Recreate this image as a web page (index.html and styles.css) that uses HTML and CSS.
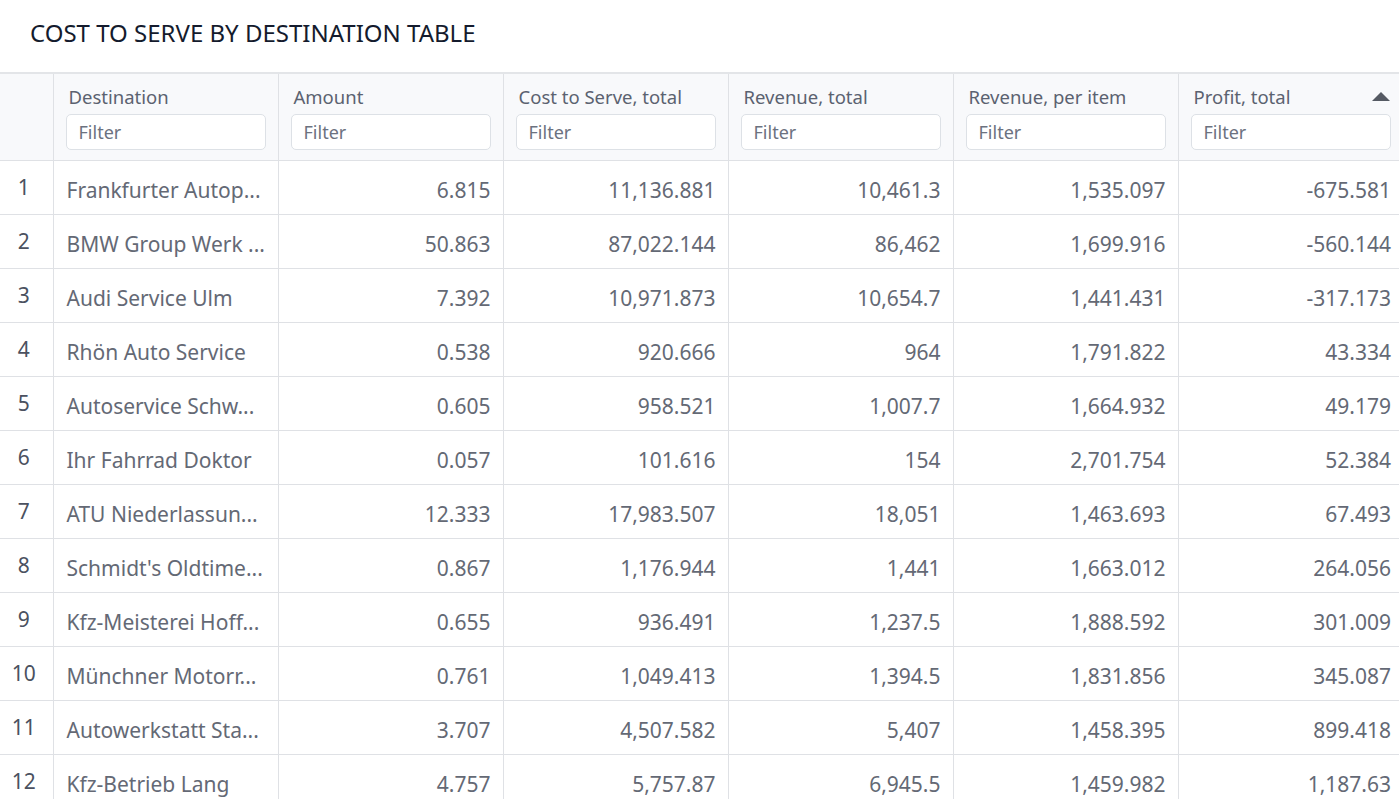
FILE: index.html
```html
<!DOCTYPE html>
<html>
<head>
<meta charset="utf-8">
<link rel="stylesheet" href="styles.css">
</head>
<body>
<div class="page">
  <h1 class="title">COST TO SERVE BY DESTINATION TABLE</h1>
  <div class="table-wrap">
    <table class="grid">
      <colgroup>
        <col class="c-idx"><col class="c-col"><col class="c-col"><col class="c-col"><col class="c-col"><col class="c-col"><col class="c-col">
      </colgroup>
      <thead>
        <tr>
          <th class="idx"></th>
          <th><div class="label">Destination</div><input class="filter" placeholder="Filter"></th>
          <th><div class="label">Amount</div><input class="filter" placeholder="Filter"></th>
          <th><div class="label">Cost to Serve, total</div><input class="filter" placeholder="Filter"></th>
          <th><div class="label">Revenue, total</div><input class="filter" placeholder="Filter"></th>
          <th><div class="label">Revenue, per item</div><input class="filter" placeholder="Filter"></th>
          <th><div class="label sorted">Profit, total<span class="sort-arrow"></span></div><input class="filter" placeholder="Filter"></th>
        </tr>
      </thead>
      <tbody>
        <tr><td class="idx">1</td><td class="txt">Frankfurter Autop...</td><td class="num">6.815</td><td class="num">11,136.881</td><td class="num">10,461.3</td><td class="num">1,535.097</td><td class="num">-675.581</td></tr>
        <tr><td class="idx">2</td><td class="txt">BMW Group Werk ...</td><td class="num">50.863</td><td class="num">87,022.144</td><td class="num">86,462</td><td class="num">1,699.916</td><td class="num">-560.144</td></tr>
        <tr><td class="idx">3</td><td class="txt">Audi Service Ulm</td><td class="num">7.392</td><td class="num">10,971.873</td><td class="num">10,654.7</td><td class="num">1,441.431</td><td class="num">-317.173</td></tr>
        <tr><td class="idx">4</td><td class="txt">Rhön Auto Service</td><td class="num">0.538</td><td class="num">920.666</td><td class="num">964</td><td class="num">1,791.822</td><td class="num">43.334</td></tr>
        <tr><td class="idx">5</td><td class="txt">Autoservice Schw...</td><td class="num">0.605</td><td class="num">958.521</td><td class="num">1,007.7</td><td class="num">1,664.932</td><td class="num">49.179</td></tr>
        <tr><td class="idx">6</td><td class="txt">Ihr Fahrrad Doktor</td><td class="num">0.057</td><td class="num">101.616</td><td class="num">154</td><td class="num">2,701.754</td><td class="num">52.384</td></tr>
        <tr><td class="idx">7</td><td class="txt">ATU Niederlassun...</td><td class="num">12.333</td><td class="num">17,983.507</td><td class="num">18,051</td><td class="num">1,463.693</td><td class="num">67.493</td></tr>
        <tr><td class="idx">8</td><td class="txt">Schmidt's Oldtime...</td><td class="num">0.867</td><td class="num">1,176.944</td><td class="num">1,441</td><td class="num">1,663.012</td><td class="num">264.056</td></tr>
        <tr><td class="idx">9</td><td class="txt">Kfz-Meisterei Hoff...</td><td class="num">0.655</td><td class="num">936.491</td><td class="num">1,237.5</td><td class="num">1,888.592</td><td class="num">301.009</td></tr>
        <tr><td class="idx">10</td><td class="txt">Münchner Motorr...</td><td class="num">0.761</td><td class="num">1,049.413</td><td class="num">1,394.5</td><td class="num">1,831.856</td><td class="num">345.087</td></tr>
        <tr><td class="idx">11</td><td class="txt">Autowerkstatt Sta...</td><td class="num">3.707</td><td class="num">4,507.582</td><td class="num">5,407</td><td class="num">1,458.395</td><td class="num">899.418</td></tr>
        <tr><td class="idx">12</td><td class="txt">Kfz-Betrieb Lang</td><td class="num">4.757</td><td class="num">5,757.87</td><td class="num">6,945.5</td><td class="num">1,459.982</td><td class="num">1,187.63</td></tr>
      </tbody>
    </table>
  </div>
</div>
</body>
</html>
```

FILE: styles.css
```css
html, body {
  margin: 0;
  padding: 0;
  background: #ffffff;
  overflow: hidden;
}

body {
  font-family: "Noto Sans", "Open Sans", sans-serif;
  width: 1399px;
  height: 799px;
}

.page {
  display: flex;
  flex-direction: column;
}

.title {
  margin: 0;
  padding: 16px 30px 0 30px;
  height: 72px;
  box-sizing: border-box;
  font-size: 24px;
  font-weight: 400;
  line-height: 34px;
  color: #141b2d;
}

.table-wrap {
  width: 1399px;
  overflow: hidden;
  border-top: 2px solid #e3e5e8;
}

.grid {
  border-collapse: collapse;
  table-layout: fixed;
  width: 1403px;
}

.c-idx { width: 53px; }
.c-col { width: 225px; }

.grid th,
.grid td {
  border-left: 1px solid #dfe1e5;
  border-bottom: 1px solid #dfe1e5;
  padding: 0 12px;
  box-sizing: border-box;
  overflow: hidden;
  white-space: nowrap;
}

.grid th:first-child,
.grid td:first-child {
  border-left: none;
}

.grid thead th {
  background: #f8f9fb;
  height: 86px;
  text-align: left;
  font-weight: 400;
  vertical-align: top;
  padding-top: 9px;
  padding-bottom: 10px;
}

.label {
  font-size: 18.5px;
  line-height: 27px;
  color: #5b6270;
  padding-left: 3px;
  margin-bottom: 4px;
  display: flex;
  align-items: center;
  justify-content: space-between;
}

.sort-arrow {
  width: 0;
  height: 0;
  border-left: 9px solid transparent;
  border-right: 9px solid transparent;
  border-bottom: 9px solid #555a63;
  margin-right: 1px;
}

.filter {
  display: block;
  width: 100%;
  height: 36px;
  box-sizing: border-box;
  border: 1px solid #dde1e6;
  border-radius: 5px;
  background: #ffffff;
  padding: 0 12px;
  font-family: "Noto Sans", "Open Sans", sans-serif;
  font-size: 18px;
  color: #6b7280;
  outline: none;
}

.filter::placeholder {
  color: #6b7280;
}

.grid tbody td {
  height: 54px;
  font-size: 21px;
  color: #646975;
  padding-top: 5px;
  vertical-align: middle;
}

.grid td.idx {
  text-align: center;
  color: #4b5160;
  padding: 0 5px 2px 0;
}

.grid td.txt {
  text-align: left;
  padding-left: 13px;
}

.grid td.num {
  text-align: right;
}
```
